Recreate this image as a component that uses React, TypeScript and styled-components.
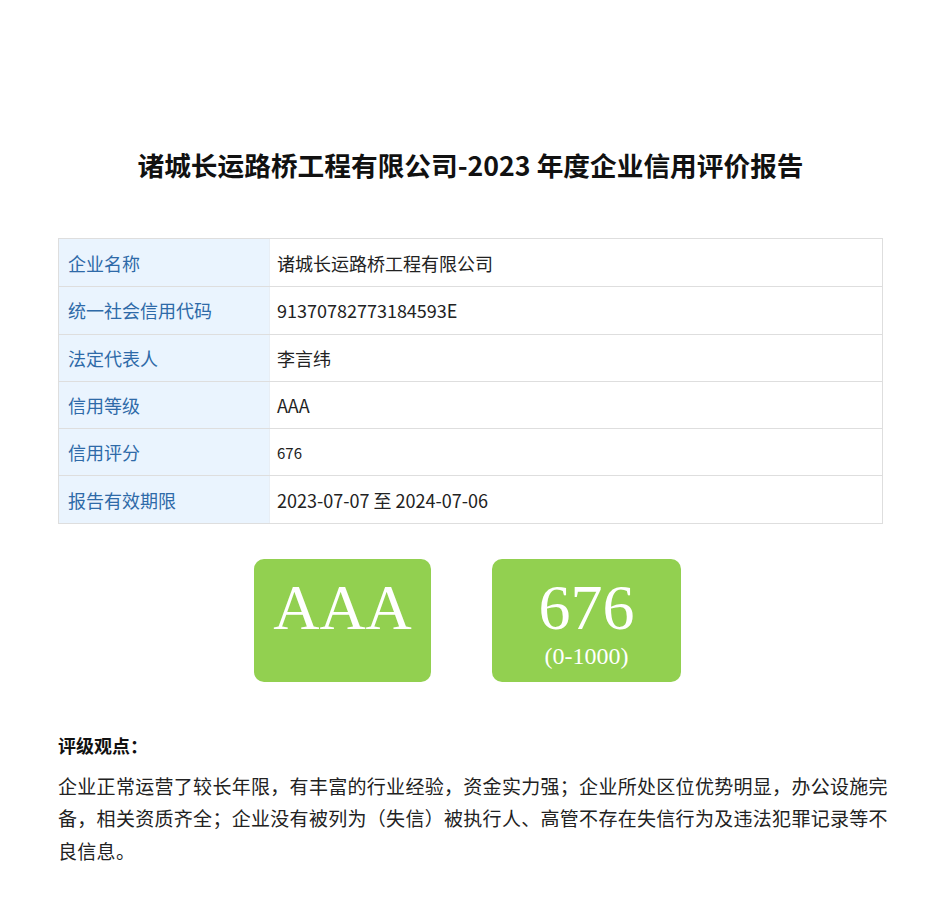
import React from 'react';
import styled, { createGlobalStyle } from 'styled-components';

const GlobalStyle = createGlobalStyle`
  * {
    margin: 0;
    padding: 0;
    box-sizing: border-box;
  }

  body {
    font-family: 'Noto Sans CJK SC', 'Noto Sans', sans-serif;
    background: #ffffff;
    color: #222;
  }
`;

const rows: { label: string; value: string; small?: boolean }[] = [
  { label: '企业名称', value: '诸城长运路桥工程有限公司' },
  { label: '统一社会信用代码', value: '91370782773184593E' },
  { label: '法定代表人', value: '李言纬' },
  { label: '信用等级', value: 'AAA' },
  { label: '信用评分', value: '676', small: true },
  { label: '报告有效期限', value: '2023-07-07 至 2024-07-06' },
];

const App: React.FC = () => {
  return (
    <>
      <GlobalStyle />
      <Page>
        <Title>诸城长运路桥工程有限公司-2023 年度企业信用评价报告</Title>

        <InfoTable>
          {rows.map((r) => (
            <Row key={r.label}>
              <Label>{r.label}</Label>
              <Value $small={r.small}>{r.value}</Value>
            </Row>
          ))}
        </InfoTable>

        <Badges>
          <Badge $width={177}>
            <BadgeMain>AAA</BadgeMain>
          </Badge>
          <Badge $width={189}>
            <BadgeMain>676</BadgeMain>
            <BadgeSub>(0-1000)</BadgeSub>
          </Badge>
        </Badges>

        <Opinion>
          <OpinionTitle>评级观点：</OpinionTitle>
          <OpinionText>
            企业正常运营了较长年限，有丰富的行业经验，资金实力强；企业所处区位优势明显，办公设施完备，相关资质齐全；企业没有被列为（失信）被执行人、高管不存在失信行为及违法犯罪记录等不良信息。
          </OpinionText>
        </Opinion>
      </Page>
    </>
  );
};

const Page = styled.div`
  width: 932px;
  min-height: 899px;
  padding: 144px 0 0 58px;
  display: flex;
  flex-direction: column;
`;

const Title = styled.h1`
  font-size: 26.7px;
  font-weight: 700;
  line-height: 42px;
  color: #111;
  text-align: center;
  width: 825px;
`;

const InfoTable = styled.div`
  margin-top: 52px;
  width: 825px;
  border: 1px solid #dedede;
  display: flex;
  flex-direction: column;
`;

const Row = styled.div`
  display: grid;
  grid-template-columns: 210px 1fr;
  height: 47.3px;
  border-top: 1px solid #dedede;

  &:first-child {
    border-top: none;
  }
`;

const Label = styled.div`
  background: #eaf4fe;
  color: #2e6aa8;
  font-size: 18px;
  padding-left: 9px;
  display: flex;
  align-items: center;
`;

const Value = styled.div<{ $small?: boolean }>`
  color: #222;
  font-size: ${({ $small }) => ($small ? '15px' : '18px')};
  padding-left: 7px;
  display: flex;
  align-items: center;
  border-left: 1px solid #e8eef5;
`;

const Badges = styled.div`
  margin-top: 35px;
  margin-left: -3px;
  width: 825px;
  display: flex;
  justify-content: center;
  gap: 61px;
`;

const Badge = styled.div<{ $width: number }>`
  width: ${({ $width }) => $width}px;
  height: 123px;
  background: #92d050;
  border-radius: 10px;
  color: #fff;
  font-family: 'Liberation Serif', 'Times New Roman', serif;
  display: flex;
  flex-direction: column;
  align-items: center;
  padding-top: 17px;
`;

const BadgeMain = styled.div`
  font-size: 64px;
  line-height: 64px;
`;

const BadgeSub = styled.div`
  font-size: 24px;
  line-height: 28px;
  margin-top: 2px;
`;

const Opinion = styled.div`
  margin-top: 48px;
`;

const OpinionTitle = styled.div`
  font-size: 18px;
  font-weight: 700;
  color: #111;
  line-height: 30px;
`;

const OpinionText = styled.p`
  margin-top: 10px;
  font-size: 19px;
  letter-spacing: 0.3px;
  line-height: 32.5px;
  color: #222;
  width: 836px;
`;

export default App;
